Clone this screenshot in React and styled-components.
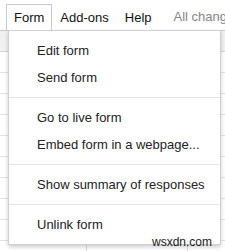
import React from "react";
import styled, { createGlobalStyle } from "styled-components";

const GlobalStyle = createGlobalStyle`
  html, body {
    margin: 0;
    padding: 0;
    background: #fff;
  }
  body {
    font-family: "Liberation Sans", Arial, sans-serif;
  }
`;

const menuTabs = [
  { id: "form", label: "Form", active: true },
  { id: "addons", label: "Add-ons" },
  { id: "help", label: "Help" },
];

const menuGroups = [
  ["Edit form", "Send form"],
  ["Go to live form", "Embed form in a webpage..."],
  ["Show summary of responses"],
  ["Unlink form"],
];

const App = () => {
  return (
    <>
      <GlobalStyle />
      <Page>
        <MenuBar>
          {menuTabs.map(({ id, label, active }) => (
            <MenuTab key={id} $active={active}>
              {label}
            </MenuTab>
          ))}
          <SaveStatus>All changes saved in Drive</SaveStatus>
        </MenuBar>
        <Sheet>
          <HeaderRow />
        </Sheet>
        <Dropdown>
          {menuGroups.map((group, index) => (
            <React.Fragment key={index}>
              {index > 0 && <Separator />}
              {group.map((item) => (
                <MenuItem key={item}>{item}</MenuItem>
              ))}
            </React.Fragment>
          ))}
        </Dropdown>
        <Watermark>wsxdn.com</Watermark>
      </Page>
    </>
  );
};

const Page = styled.div`
  position: relative;
  width: 225px;
  height: 251px;
  overflow: hidden;
  display: flex;
  flex-direction: column;
  background: #fff;
`;

const MenuBar = styled.div`
  display: flex;
  align-items: flex-end;
  height: 30px;
  padding-left: 6px;
  border-bottom: 1px solid #c9c9c9;
  white-space: nowrap;
  overflow: hidden;
  font-size: 13px;
  color: #111;
`;

const MenuTab = styled.div`
  position: relative;
  z-index: 3;
  height: 26px;
  line-height: 26px;
  padding: 0 7px;
  margin-bottom: -1px;
  border: 1px solid ${({ $active }) => ($active ? "#cacaca" : "transparent")};
  border-bottom: none;
  background: ${({ $active }) => ($active ? "#fff" : "transparent")};
`;

const SaveStatus = styled.div`
  height: 26px;
  line-height: 26px;
  margin-left: 14px;
  color: #858585;
`;

const Sheet = styled.div`
  flex: 1;
  display: flex;
  flex-direction: column;
  background-color: #fff;
  background-image: repeating-linear-gradient(
      to bottom,
      transparent 0 20px,
      #e2e2e2 20px 21px
    ),
    linear-gradient(to right, transparent 0 86px, #dadada 86px 87px, transparent 87px 187px, #dadada 187px 188px, transparent 188px);
`;

const HeaderRow = styled.div`
  height: 20px;
  background: #f1f1f1;
  border-bottom: 1px solid #d6d6d6;
`;

const Dropdown = styled.div`
  position: absolute;
  z-index: 2;
  top: 30px;
  left: 8px;
  width: 211px;
  padding: 6px 0;
  background: #fff;
  border: 1px solid #cfcfcf;
  box-shadow: 0 2px 4px rgba(0, 0, 0, 0.2);
  font-size: 13px;
  color: #222;
`;

const MenuItem = styled.div`
  height: 27px;
  line-height: 27px;
  padding-left: 28px;
  white-space: nowrap;
`;

const Separator = styled.div`
  height: 1px;
  margin: 6px 0;
  background: #e5e5e5;
`;

const Watermark = styled.div`
  position: absolute;
  z-index: 4;
  left: 152px;
  top: 234px;
  font-size: 12px;
  line-height: 16px;
  color: #1a1a1a;
`;

export default App;
